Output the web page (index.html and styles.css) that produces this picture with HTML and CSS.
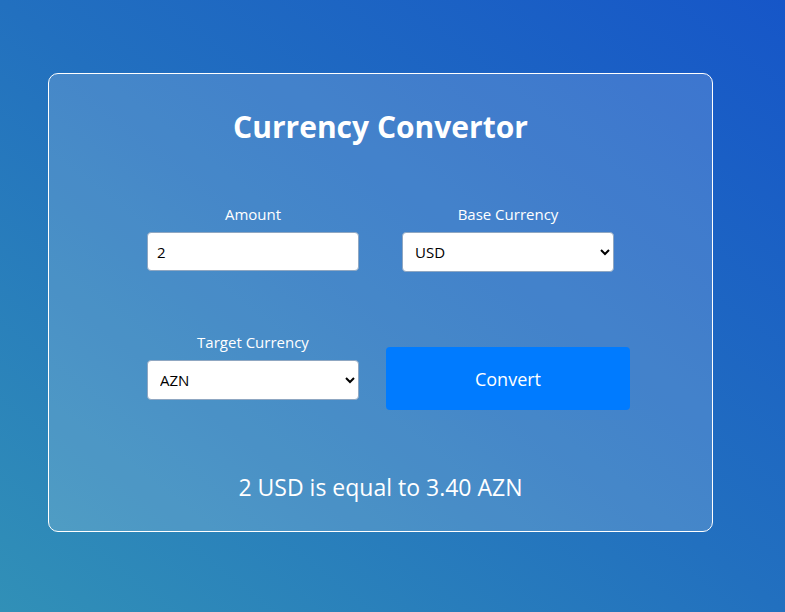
FILE: index.html
```html
<!DOCTYPE html>
<html lang="en">
<head>
<meta charset="utf-8">
<title>Currency Convertor</title>
<link rel="stylesheet" href="styles.css">
</head>
<body>
<div class="card">
  <h1 class="title">Currency Convertor</h1>
  <div class="form">
    <div class="field">
      <label class="label" for="amount">Amount</label>
      <input class="control input" id="amount" type="text" value="2">
    </div>
    <div class="field">
      <label class="label" for="base">Base Currency</label>
      <select class="control select" id="base"><option>USD</option></select>
    </div>
    <div class="field">
      <label class="label" for="target">Target Currency</label>
      <select class="control select" id="target"><option>AZN</option></select>
    </div>
    <div class="field">
      <button class="btn" type="button">Convert</button>
    </div>
  </div>
  <p class="result">2 USD is equal to 3.40 AZN</p>
</div>
</body>
</html>
```
FILE: styles.css
```css
html, body {
  margin: 0;
  height: 100%;
}
body {
  background: linear-gradient(to top right, #3190b7 0%, #2270bf 50%, #1656c8 100%);
  font-family: "Open Sans", "Noto Sans", sans-serif;
  color: #fff;
  overflow: hidden;
}
.card {
  box-sizing: border-box;
  width: 665px;
  height: 459px;
  margin: 73px 0 0 48px;
  border: 1px solid #fff;
  border-radius: 10px;
  background: rgba(255, 255, 255, 0.16);
  padding-top: 33px;
  display: flex;
  flex-direction: column;
  align-items: center;
}
.title {
  margin: 0;
  font-size: 30px;
  line-height: 40px;
  font-weight: 700;
}
.form {
  margin-top: 58px;
  display: grid;
  grid-template-columns: 245px 245px;
  column-gap: 10px;
  row-gap: 61px;
  align-items: start;
}
.field {
  display: flex;
  flex-direction: column;
  align-items: center;
}
.label {
  font-size: 15px;
  line-height: 19px;
  margin-bottom: 8px;
}
.control {
  box-sizing: border-box;
  width: 212px;
  border: 1px solid #8fa7c2;
  border-radius: 4px;
  background: #fff;
  color: #000;
  font-family: "Open Sans", "Noto Sans", sans-serif;
  font-size: 15px;
  margin: 0;
}
.input {
  height: 39px;
  padding: 0 9px;
}
.select {
  height: 40px;
  padding: 0 8px;
}
.btn {
  margin-top: 14px;
  width: 244px;
  height: 63px;
  border: none;
  border-radius: 4px;
  background: #007bff;
  color: #fff;
  font-family: "Open Sans", "Noto Sans", sans-serif;
  font-size: 18px;
}
.result {
  margin: 62px 0 0;
  font-size: 23px;
  line-height: 30px;
}
```
